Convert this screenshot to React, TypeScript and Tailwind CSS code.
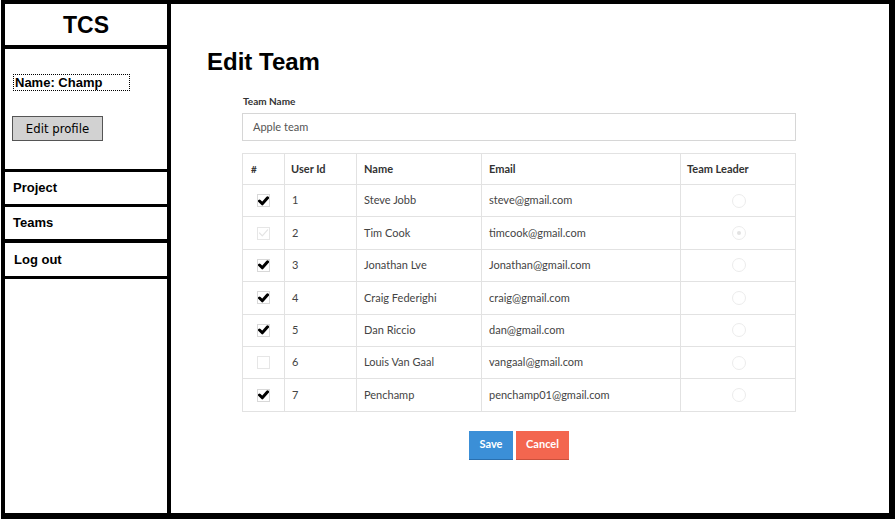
import React from "react";

type Row = { id: number; name: string; email: string; checked: boolean; disabled?: boolean; leader?: boolean };

const rows: Row[] = [
  { id: 1, name: "Steve Jobb", email: "steve@gmail.com", checked: true },
  { id: 2, name: "Tim Cook", email: "timcook@gmail.com", checked: true, disabled: true, leader: true },
  { id: 3, name: "Jonathan Lve", email: "Jonathan@gmail.com", checked: true },
  { id: 4, name: "Craig Federighi", email: "craig@gmail.com", checked: true },
  { id: 5, name: "Dan Riccio", email: "dan@gmail.com", checked: true },
  { id: 6, name: "Louis Van Gaal", email: "vangaal@gmail.com", checked: false },
  { id: 7, name: "Penchamp", email: "penchamp01@gmail.com", checked: true },
];

function Check({ checked, disabled }: { checked: boolean; disabled?: boolean }) {
  return (
    <span
      className={
        "inline-flex w-[13px] h-[13px] items-center justify-center border bg-white " +
        (disabled || !checked ? "border-[#e6e6e6]" : "border-[#d8d8d8]")
      }
    >
      {checked && (
        <svg width="11" height="10" viewBox="0 0 11 10">
          <path
            d="M1.5 5 L4.3 7.8 L9.6 1.8"
            fill="none"
            stroke={disabled ? "#e4e4e4" : "#000"}
            strokeWidth={disabled ? 1.2 : 3}
            strokeLinecap="round"
            strokeLinejoin="round"
          />
        </svg>
      )}
    </span>
  );
}

function Radio({ on }: { on?: boolean }) {
  return (
    <span className="inline-flex w-[14px] h-[14px] rounded-full border border-[#ececec] bg-white items-center justify-center">
      {on && <span className="w-[4px] h-[4px] rounded-full bg-[#e2e2e2]" />}
    </span>
  );
}

export default function App() {
  const arial = { fontFamily: '"Liberation Sans", Arial, sans-serif' } as React.CSSProperties;
  return (
    <div className="w-[895px] h-[519px] bg-white pl-[1px]" style={arial}>
      <div className="w-[894px] h-[519px] flex border-t-4 border-l-4 border-r-[6px] border-b-[6px] border-black">
        {/* Sidebar */}
        <div className="w-[166px] h-full border-r-4 border-black flex flex-col shrink-0">
          <div className="h-[45px] border-b-4 border-black flex items-center justify-center text-[23px] font-bold text-black pt-[1px]">
            TCS
          </div>
          <div className="h-[123px] border-b-[3px] border-black pl-[8px] pt-[25px] flex flex-col items-start">
            <div className="border border-dotted border-black px-[1px] h-[17px] w-[117px] flex items-center text-[13px] font-bold leading-none text-black">
              Name: Champ
            </div>
            <div
              className="mt-[25px] w-[91px] h-[25px] bg-[#d2d2d2] border border-[#555] flex items-center justify-center text-[13px] text-black -ml-[1px]"
              style={{ fontFamily: '"DejaVu Sans Condensed", "DejaVu Sans", sans-serif' }}
            >
              Edit profile
            </div>
          </div>
          <div className="h-[35px] border-b-[3px] border-black pl-[8px] flex items-center text-[13px] font-bold text-black">
            Project
          </div>
          <div className="h-[36px] border-b-4 border-black pl-[8px] flex items-center text-[13px] font-bold text-black">
            Teams
          </div>
          <div className="h-[36px] border-b-[3px] border-black pl-[9px] flex items-center text-[13px] font-bold text-black">
            Log out
          </div>
        </div>

        {/* Main */}
        <div className="flex-1 pl-[36px] pt-[43px]">
          <h1 className="text-[24px] font-bold leading-[30px] text-black">Edit Team</h1>
          <div
            className="ml-[35px] w-[554px] mt-[18px]"
            style={{ fontFamily: "Lato, 'Open Sans', sans-serif" }}
          >
            <div className="text-[10px] font-bold text-[#333] leading-[12px] pl-[1px]">Team Name</div>
            <div className="mt-[6px] h-[28px] border border-[#d6d6d6] flex items-center pl-[10px] text-[11px] text-[#555]">
              Apple team
            </div>
            <table className="mt-[12px] w-[554px] border-collapse text-[11px] text-[#444]">
              <thead>
                <tr className="h-[31px]">
                  <th className="w-[42px] border border-[#e2e2e2] text-left pl-[8px] font-bold text-[10px] text-[#333]">#</th>
                  <th className="w-[72px] border border-[#e2e2e2] text-left pl-[6px] font-bold text-[#333]">User Id</th>
                  <th className="w-[125px] border border-[#e2e2e2] text-left pl-[7px] font-bold text-[#333]">Name</th>
                  <th className="w-[199px] border border-[#e2e2e2] text-left pl-[7px] font-bold text-[#333]">Email</th>
                  <th className="border border-[#e2e2e2] text-left pl-[6px] font-bold text-[#333]">Team Leader</th>
                </tr>
              </thead>
              <tbody>
                {rows.map((r) => (
                  <tr key={r.id} className="h-[32.4px]">
                    <td className="border border-[#e2e2e2] pl-[14px] align-middle">
                      <div className="flex items-center"><Check checked={r.checked} disabled={r.disabled} /></div>
                    </td>
                    <td className="border border-[#e2e2e2] pl-[7px]">{r.id}</td>
                    <td className="border border-[#e2e2e2] pl-[7px]">{r.name}</td>
                    <td className="border border-[#e2e2e2] pl-[7px]">{r.email}</td>
                    <td className="border border-[#e2e2e2]">
                      <div className="flex justify-center pl-[1px]"><Radio on={r.leader} /></div>
                    </td>
                  </tr>
                ))}
              </tbody>
            </table>
            <div className="flex justify-center gap-[3px] mt-[19px]">
              <div className="w-[44px] h-[28px] bg-[#3b8fd7] text-white text-[11px] font-bold flex items-center justify-center shadow-[0_1px_0_#2a6fae]">
                Save
              </div>
              <div className="w-[53px] h-[28px] bg-[#f3664f] text-white text-[11px] font-bold flex items-center justify-center shadow-[0_1px_0_#c9503c]">
                Cancel
              </div>
            </div>
          </div>
        </div>
      </div>
    </div>
  );
}
